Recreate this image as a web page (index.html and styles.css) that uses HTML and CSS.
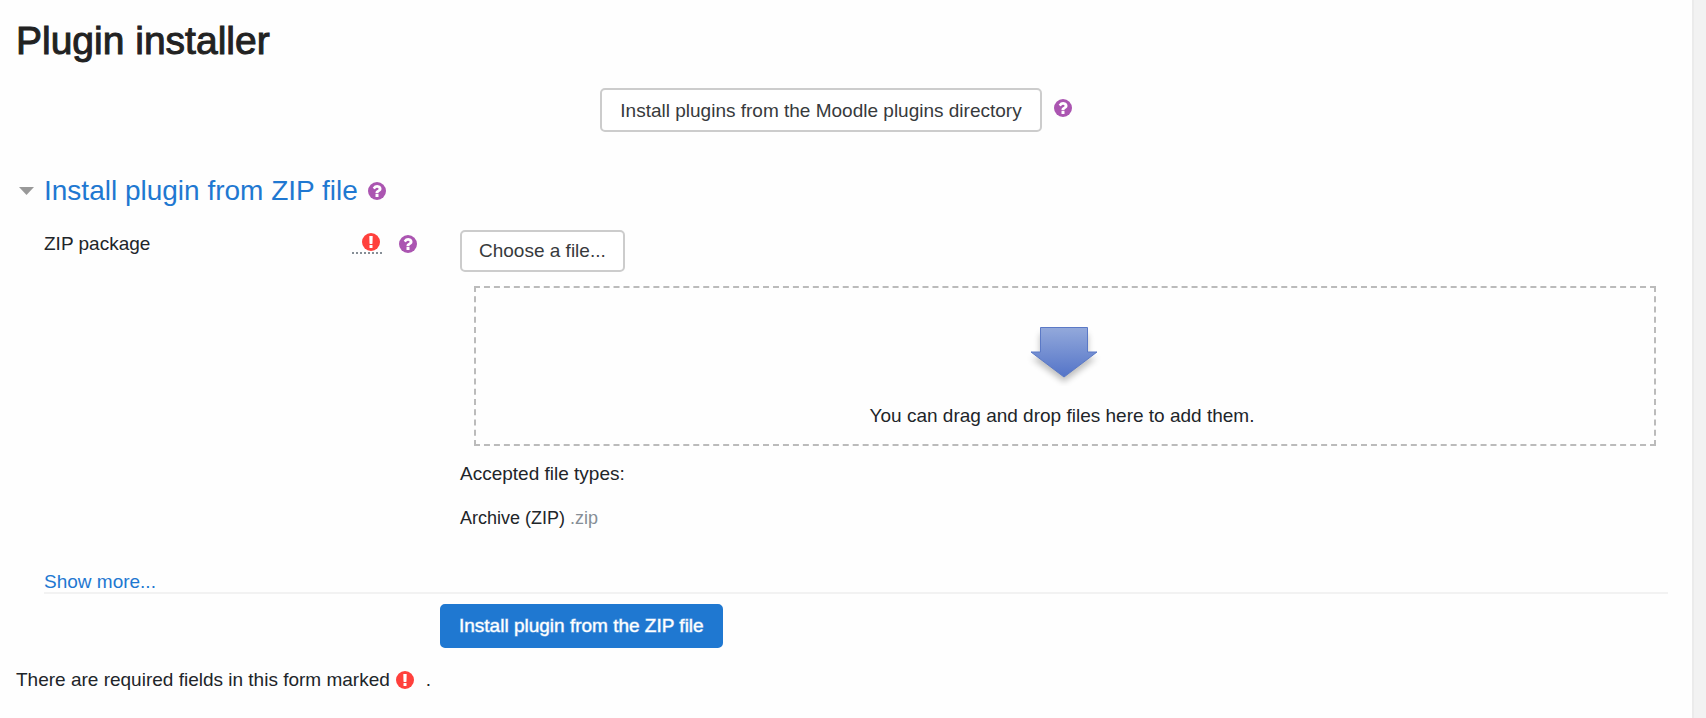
FILE: index.html
```html
<!DOCTYPE html>
<html lang="en">
<head>
<meta charset="utf-8">
<title>Plugin installer</title>
<link rel="stylesheet" href="styles.css">
</head>
<body>
<svg class="defs" aria-hidden="true">
  <symbol id="help" viewBox="0 0 1536 1536">
    <path fill="#ab55b1" d="M768 0a768 768 0 1 0 0 1536A768 768 0 1 0 768 0z"/>
    <path fill="#fff" d="M896 1248v-192q0-14-9-23t-23-9H672q-14 0-23 9t-9 23v192q0 14 9 23t23 9h192q14 0 23-9t9-23zM1152 576q0-88-55.500-163T958 297t-170-41q-243 0-371 213-15 24 8 42l132 100q7 6 19 6 16 0 25-12 53-68 86-92 34-24 86-24 48 0 85.500 26t37.500 59q0 38-20 61t-68 45q-63 28-115.500 86.500T640 892v36q0 14 9 23t23 9h192q14 0 23-9t9-23q0-19 21.500-49.500T972 829q32-18 49-28.500t46-35 44.500-48 28-60.500 12.500-81z"/>
  </symbol>
  <symbol id="required" viewBox="0 0 1536 1536">
    <path fill="#ff403c" d="M768 0a768 768 0 1 0 0 1536A768 768 0 1 0 768 0z"/>
    <path fill="#fff" d="M896 1247v-190q0-14-9-23.500t-22-9.500H673q-13 0-23 10t-10 23v190q0 13 10 23t23 10h192q13 0 22-9.500t9-23.500zM894 903l18-621q0-12-10-18-10-8-24-8H658q-14 0-24 8-10 6-10 18l17 621q0 10 10 17.500t24 7.500h185q14 0 23.500-7.500T894 903z"/>
  </symbol>
</svg>
<main class="page">
  <h1 class="title">Plugin installer</h1>
  <div class="directory">
    <button type="button" class="btn">Install plugins from the Moodle plugins directory</button>
    <a class="help" href="#" aria-label="Help with installing from the directory"><svg class="icon"><use href="#help"/></svg></a>
  </div>
  <form class="form">
    <section class="section">
      <h2 class="section-title">
        <svg class="caret" viewBox="0 0 15 8" aria-hidden="true"><path d="M0 0h15L7.500 8z" fill="#999"/></svg>
        <a href="#">Install plugin from ZIP file</a>
        <a class="help" href="#" aria-label="Help with installing from ZIP"><svg class="icon"><use href="#help"/></svg></a>
      </h2>
      <div class="row">
        <div class="label-cell">
          <label for="package">ZIP package</label>
          <span class="marks">
            <abbr class="required" title="Required"><svg class="icon"><use href="#required"/></svg></abbr>
            <a class="help" href="#" aria-label="Help with ZIP package"><svg class="icon"><use href="#help"/></svg></a>
          </span>
        </div>
        <div class="field">
          <button type="button" id="package" class="btn btn-file">Choose a file...</button>
          <div class="dropzone">
            <svg class="arrow" viewBox="0 0 78 66" aria-hidden="true">
              <defs>
                <linearGradient id="blue" x1="0" y1="0" x2="0" y2="1"><stop offset="0" stop-color="#93a9db"/><stop offset="1" stop-color="#5474c8"/></linearGradient>
                <filter id="soft" x="-20%" y="-20%" width="140%" height="150%"><feGaussianBlur stdDeviation="3"/></filter>
              </defs>
              <path d="M14 14h48v24h9L38 62 5 38h9z" fill="#000" opacity=".25" filter="url(#soft)"/>
              <path d="M14.500 7.500h47V32H71L38 57 5 32h9.500z" fill="url(#blue)" stroke="#5b79c6"/>
            </svg>
            <p class="drop-text">You can drag and drop files here to add them.</p>
          </div>
          <p class="types">Accepted file types:</p>
          <p class="types types-list">Archive (ZIP) <small class="ext">.zip</small></p>
        </div>
      </div>
      <a class="more" href="#">Show more...</a>
    </section>
    <button type="submit" class="btn btn-primary">Install plugin from the ZIP file</button>
    <p class="note">There are required fields in this form marked <svg class="icon" role="img" aria-label="Required"><use href="#required"/></svg><span class="stop">.</span></p>
  </form>
</main>
</body>
</html>
```
FILE: styles.css
```css
* { box-sizing: border-box; }

body {
  margin: 0;
  background: #f2f2f2;
  color: #212529;
  font: 19px/28px "Liberation Sans", Arial, sans-serif;
}

h1, h2, p { margin: 0; font-weight: 400; }
a { color: #1f78d1; text-decoration: none; }
.defs { position: absolute; width: 0; height: 0; }

.page {
  min-height: 100vh;
  margin-right: 12px;
  padding: 18px 24px 16px 16px;
  background: #fefefe;
  border-right: 2px solid #ebebeb;
}

.title {
  color: #222;
  font-size: 39px;
  line-height: 46px;
  -webkit-text-stroke: 1px #222;
}

.icon { display: block; width: 18px; height: 18px; }
.help { display: block; }

.btn {
  height: 44px;
  padding: 2px 18px 0;
  border: 2px solid #ccc;
  border-radius: 5px;
  background: #fff;
  color: #373a3c;
  font: inherit;
}

.directory {
  display: flex;
  justify-content: center;
  align-items: center;
  gap: 12px;
  margin-top: 24px;
  padding-right: 12px;
}
.directory .help { padding-bottom: 4px; }

.form { margin-top: 41px; }
.section {
  margin-left: 28px;
  border-bottom: 2px solid #f2f2f2;
}

.section-title {
  display: flex;
  align-items: center;
  gap: 10px;
  margin-left: -25px;
  font-size: 28px;
  line-height: 36px;
}
.caret { width: 15px; height: 8px; }

.row {
  display: grid;
  grid-template-columns: 416px 1fr;
  margin-top: 21px;
}
.label-cell {
  display: flex;
  justify-content: space-between;
  align-items: flex-start;
  padding-right: 43px;
}
.marks { display: flex; gap: 17px; padding-top: 3px; }
.marks .help { padding-top: 2px; }
.required {
  padding: 0 2px 1px 10px;
  border-bottom: 2px dotted #868e96;
  text-decoration: none;
}

.btn-file { display: block; height: 42px; padding: 0 17px; }

.dropzone {
  display: flex;
  flex-direction: column;
  align-items: center;
  margin: 14px 12px 14px 14px;
  padding: 32px 0 14px;
  border: 2px dashed #bbb;
}
.arrow { width: 78px; height: 66px; }
.drop-text { margin-top: 16px; padding-right: 6px; }
.types { margin-bottom: 16px; }
.types-list { font-size: 18px; }
.ext { color: #868e96; font-size: inherit; }

.more { display: block; margin-top: 24px; line-height: 20px; }

.btn-primary {
  display: block;
  margin: 10px 0 0 424px;
  padding: 0 17px;
  border-color: #1f78d1;
  background: #1f78d1;
  color: #fff;
  -webkit-text-stroke: 1px rgba(255, 255, 255, .5);
}

.note {
  display: flex;
  align-items: center;
  gap: 6px;
  margin-top: 18px;
}
.stop { padding-left: 6px; }
```
